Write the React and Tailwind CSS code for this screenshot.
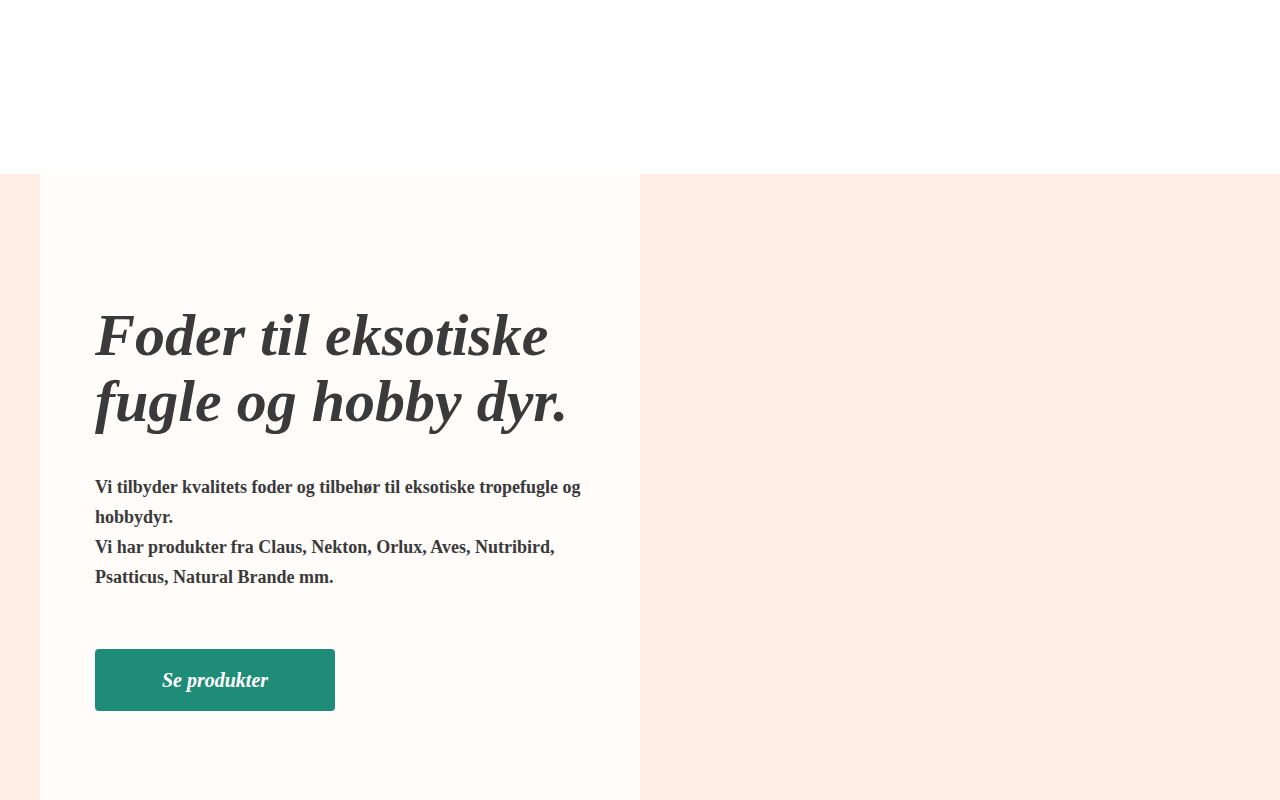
import React from "react";

export default function App() {
    return (
        <div className="min-h-screen bg-white">
            <header className="h-[174px] bg-white"></header>
            <section className="bg-[#ffeee6] flex px-10">
                <div className="w-[600px] bg-[#fffcfa] pl-[55px] pr-[40px] pt-[128px] pb-[120px]" style={{ fontFamily: '"Liberation Serif", "Times New Roman", serif' }}>
                    <h1 className="text-[#3a3a3a] text-[60px] leading-[66px] font-bold italic">
                        Foder til eksotiske fugle og hobby dyr.
                    </h1>
                    <p className="mt-[38px] text-[#3a3a3a] text-[18px] leading-[30px] font-bold">
                        Vi tilbyder kvalitets foder og tilbehør til eksotiske tropefugle og hobbydyr.
                        <br />
                        Vi har produkter fra Claus, Nekton, Orlux, Aves, Nutribird, Psatticus, Natural Brande mm.
                    </p>
                    <button className="block mt-[57px] w-[240px] h-[62px] rounded bg-[#1f8c78] text-white text-[20px] font-bold italic">
                        Se produkter
                    </button>
                </div>
                <div className="flex-1"></div>
            </section>
        </div>
    );
}
